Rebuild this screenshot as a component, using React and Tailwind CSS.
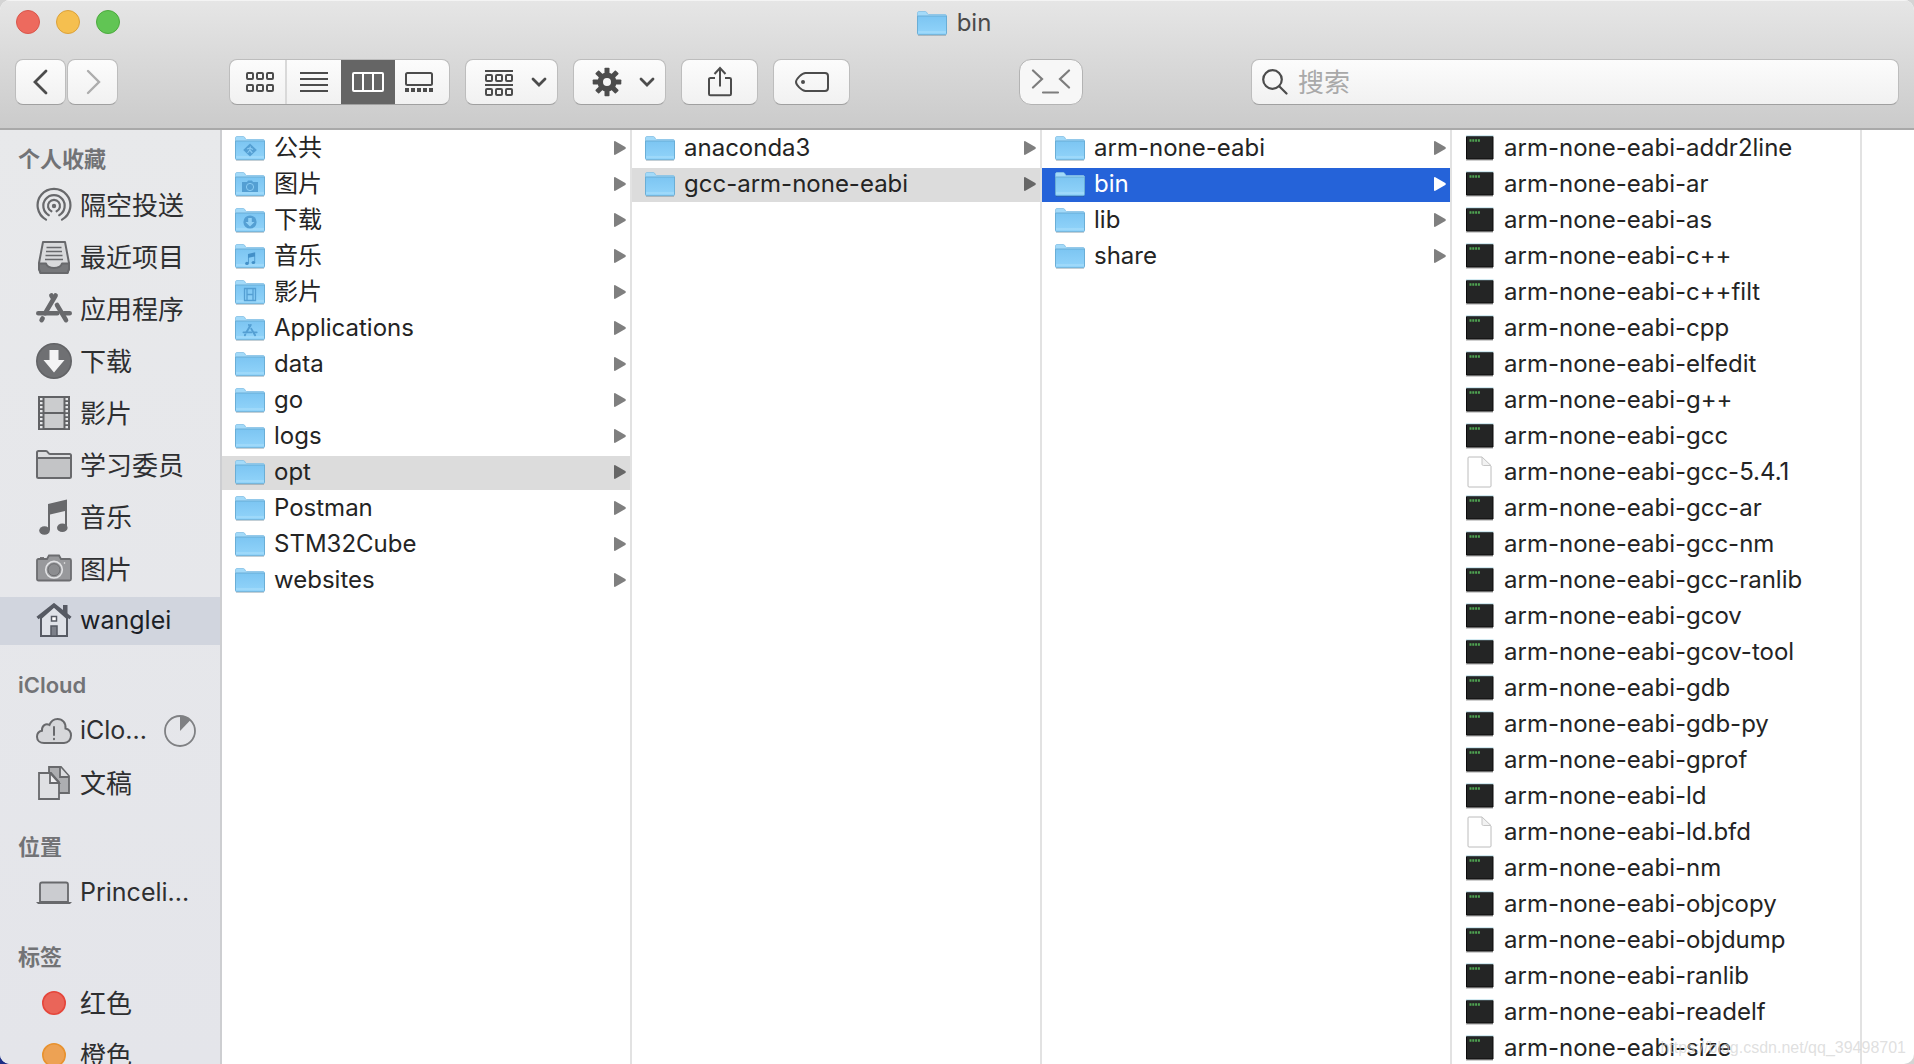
import React from "react";

const FONT = "font-['Inter','Noto_Sans_CJK_SC',sans-serif]";

/* ---------- shared glyphs ---------- */

function AppsGlyph() {
  return (
    <g fill="none" strokeLinecap="round">
      <path d="M19.6 4.5 9.2 22.2M6.6 27.4l-1 1.8" strokeWidth="4.6" />
      <path d="M15.4 4.5 17 7.2M21 14l9 15.2" strokeWidth="4.6" />
      <path d="M2.3 22.3h19M28 22.3h5.7" strokeWidth="4.6" />
    </g>
  );
}

function NotesGlyph() {
  return (
    <g>
      <path d="M11 5.5 31 1v28h-2.2V12.4L13.2 15.8V31H11z" />
      <ellipse cx="8.2" cy="31.6" rx="5" ry="4.3" />
      <ellipse cx="26" cy="29" rx="5" ry="4.3" />
    </g>
  );
}

/* ---------- sidebar icons, 36 x 36 ---------- */

function SideIcon({ name }) {
  const icons = {
    airdrop: (
      <g fill="none" stroke="#68696c" strokeWidth="2.2" strokeLinecap="round">
        <circle cx="18" cy="19" r="2.2" fill="#68696c" stroke="none" />
        <path d="M15.4 24.3a6 6 0 1 1 5.2 0" />
        <path d="M12.8 28.2a10.7 10.7 0 1 1 10.4 0" />
        <path d="M10 32.6a16.4 16.4 0 1 1 16 0" />
      </g>
    ),
    recents: (
      <g stroke="#68696c" strokeWidth="2" strokeLinejoin="round">
        <path d="M7 3h22l4 21v6l-1.500 4h-27L3 30v-6z" fill="#d9dadc" />
        <path d="M3 24.500h7c1 3 4 4.500 8 4.500s7-1.500 8-4.500h7V30l-1.500 4h-27L3 30z" fill="#77787b" />
        <path d="M10.500 8.500h15M10 12.500h16M9.500 16.500h17M9 20.500h18" strokeWidth="1.600" />
      </g>
    ),
    apps: (
      <g stroke="#68696c">
        <AppsGlyph />
      </g>
    ),
    downloads: (
      <g>
        <circle cx="18" cy="18" r="17.200" fill="#6f7073" stroke="#626366" strokeWidth="1.600" />
        <path d="M13.500 7h9v10h6L18 29.500 7.500 17h6z" fill="#f4f4f5" />
      </g>
    ),
    movies: (
      <g>
        <path d="M2 1h32v34H2z" fill="#616265" />
        <path d="M8.500 3h19v14h-19zM8.500 19h19v14h-19z" fill="#cbccce" />
        {[3, 7, 11, 15, 19, 23, 27, 31].map((y) => (
          <path key={y} d={`M4 ${y}h2.500v2.200H4zM29.500 ${y}h2.500v2.200h-2.500z`} fill="#e6e7e9" />
        ))}
      </g>
    ),
    folder: (
      <g fill="#c3c4c6" stroke="#68696c" strokeWidth="2" strokeLinejoin="round">
        <path d="M1 11V5.500C1 4.500 1.500 4 2.500 4h7.500c2 0 2 3 4 3h19.500c1 0 1.500.5 1.500 1.500V11z" fill="#dcdddf" />
        <path d="M1 11h34v18.500c0 1-.5 1.500-1.500 1.500h-31c-1 0-1.500-.5-1.500-1.500z" />
      </g>
    ),
    music: (
      <g fill="#68696c">
        <path d="M12 5 31 .500V28h-2V12l-15 3.500V31h-2z" />
        <ellipse cx="8.500" cy="31.500" rx="5.300" ry="4.300" />
        <ellipse cx="26.300" cy="28.800" rx="5.300" ry="4.300" />
      </g>
    ),
    pictures: (
      <g stroke="#6c6d70" strokeWidth="1.800">
        <path d="M2.500 8H11l2-3.500h10L25 8h8.500c1 0 1.500.5 1.500 1.500V28c0 1-.5 1.500-1.500 1.500h-31C1.500 29.500 1 29 1 28V9.500C1 8.500 1.500 8 2.500 8z" fill="#98999c" />
        <path d="M4 7h4" />
        <circle cx="18" cy="18.700" r="8.300" fill="#98999c" stroke="#e2e3e5" strokeWidth="1.600" />
        <circle cx="18" cy="18.700" r="6" fill="#8c8d90" strokeWidth="1" />
        <circle cx="28.500" cy="12" r=".8" fill="#eee" stroke="none" />
      </g>
    ),
    home: (
      <g stroke="#565a63" strokeWidth="2">
        <path d="M28 3h2.500v9L28 10z" fill="#565a63" />
        <path d="M5 15v18h26V15L18 3.500z" fill="#dfe2e8" />
        <path d="M1.500 15 18 2l16.500 13" fill="none" strokeWidth="3.400" />
        <path d="M15.500 13.500h5v4.500h-5z" fill="#fff" strokeWidth="1.500" />
        <path d="M15 23h6v10h-6z" fill="#7c8089" strokeWidth="1.500" />
      </g>
    ),
    cloud: (
      <g stroke="#68696c" strokeWidth="2" strokeLinecap="round">
        <path d="M8 30c-4 0-7-2.600-7-6.300 0-3.200 2.200-5.500 5-6C5.500 12.500 10 10 13.500 12 15 8 18 6 21.500 6c5 0 8.600 4 8 9.500 3.300.8 5.500 3.500 5.500 7 0 4.300-3 7.500-7 7.500z" fill="#d6d7da" />
        <path d="M18 14v8M18 25.800v.4" />
      </g>
    ),
    documents: (
      <g stroke="#68696c" strokeWidth="1.800">
        <path d="M13 2h12l8 9v17H13z" fill="#adaeb1" />
        <path d="M24 2v10h9" fill="#dcdde0" />
        <path d="M3 8h12l8 9v17H3z" fill="#dfe0e3" />
        <path d="M14 8v10h9z" fill="#f0f0f2" />
      </g>
    ),
    laptop: (
      <g>
        <path d="M4 27V9.500C4 8 4.500 7.500 6 7.500h24c1.500 0 2 .5 2 2V27z" fill="#cbccd0" stroke="#68696c" strokeWidth="1.800" />
        <path d="M0 27h36l-2 2H2z" fill="#68696c" />
      </g>
    ),
    red: <circle cx="18" cy="18" r="11.200" fill="#ea6559" stroke="#e5463b" strokeWidth="1.600" />,
    orange: <circle cx="18" cy="18" r="11.200" fill="#eda254" stroke="#e8922f" strokeWidth="1.600" />,
  };
  return (
    <svg viewBox="0 0 36 36" className="size-9 shrink-0" aria-hidden="true">
      {icons[name]}
    </svg>
  );
}

/* ---------- file icons ---------- */

function Badge({ name }) {
  const badges = {
    public: (
      <g>
        <path d="M15 7.500l6.800 6.500L15 20.500 8.200 14z" fill="#549fd3" />
        <g stroke="#86c8f2" strokeWidth="1.200" fill="none">
          <path d="M15.500 10.500 14.800 14l2.500 3M14.800 14l-2.300 3M12 13l3-1 3 1.500" />
        </g>
      </g>
    ),
    camera: (
      <g>
        <path d="M7 10h5l1-1.500h4L18 10h5v10H7z" fill="#549fd3" />
        <circle cx="15" cy="15" r="3.600" fill="#549fd3" stroke="#8accf4" strokeWidth="1" />
      </g>
    ),
    down: (
      <g>
        <circle cx="15" cy="14" r="6.600" fill="#549fd3" />
        <path d="M13.200 10h3.600v4h2.700L15 18.500 10.500 14h2.700z" fill="#8fd0f6" />
      </g>
    ),
    notes: (
      <g transform="translate(9 8) scale(.36)" fill="#4390c8">
        <NotesGlyph />
      </g>
    ),
    film: (
      <g fill="none" stroke="#549fd3" strokeWidth="1.300">
        <path d="M9.500 8.500h11v12h-11z" />
        <path d="M12 8v13M18 8v13M12 14.500h6" />
      </g>
    ),
    apps: (
      <g transform="translate(7.500 7) scale(.42)" stroke="#549fd3">
        <AppsGlyph />
      </g>
    ),
  };
  return badges[name] ?? null;
}

function FolderIcon({ badge }) {
  return (
    <svg viewBox="0 0 30 25" className="h-[25px] w-[30px] shrink-0" aria-hidden="true">
      <defs>
        <linearGradient id="folderFront" x1="0" y1="0" x2="0" y2="1">
          <stop offset="0" stopColor="#7cc5f2" />
          <stop offset="1" stopColor="#92d4fa" />
        </linearGradient>
      </defs>
      <path d="M1 24.500h28" stroke="#000" strokeOpacity=".16" />
      <path d="M.5 22V2C.5 1 1 .5 2 .5h6.500c1.500 0 1.500 3 3 3H28c1 0 1.500.5 1.500 1.500v17z" fill="#a3daf9" stroke="#84c0e4" strokeWidth=".8" />
      <path d="M.5 5h29v17.500c0 .7-.5 1.200-1.200 1.200H1.700C1 23.700.5 23.200.5 22.500z" fill="url(#folderFront)" stroke="#67aad3" strokeWidth=".9" />
      <path d="M1 21h28" stroke="#b5e3fc" strokeWidth=".8" />
      <Badge name={badge} />
    </svg>
  );
}

function ExecIcon() {
  return (
    <svg viewBox="0 0 30 26" className="h-[26px] w-[30px] shrink-0" aria-hidden="true">
      <path d="M1 25h27" stroke="#000" strokeOpacity=".25" strokeWidth="1.500" />
      <path d="M1.500 1.500H28V24H1.500z" fill="#242525" stroke="#0b0b0b" />
      <path d="M1 .8h27.500" stroke="#bfe0ea" />
      <path d="M4.500 5.500h11" stroke="#4fa452" strokeWidth="2.400" strokeDasharray="2 .8" />
    </svg>
  );
}

function FileIcon() {
  return (
    <svg viewBox="0 0 30 32" className="h-8 w-[30px] shrink-0" aria-hidden="true">
      <path d="M4 1h13l9 9v20c0 .6-.4 1-1 1H4c-.6 0-1-.4-1-1V2c0-.6.400-1 1-1z" fill="#fff" stroke="#bcbcbc" />
      <path d="M17 1v7c0 1 .5 1.500 1.500 1.500H26z" fill="#f2f2f2" stroke="#c6c6c6" />
    </svg>
  );
}

/* ---------- toolbar icons ---------- */

function ToolIcon({ name }) {
  const squares = (y) =>
    [1, 11, 21].map((x) => <rect key={x + "-" + y} x={x} y={y} width="6" height="6" rx="1" />);
  const icons = {
    back: <path d="M19 4 8 15l11 11" strokeWidth="2.800" stroke="#4c4c4c" strokeLinecap="round" />,
    forward: <path d="M9 4l11 11L9 26" strokeWidth="2.400" stroke="#adadad" strokeLinecap="round" />,
    grid: (
      <g>
        {squares(6)}
        {squares(18)}
      </g>
    ),
    list: <path d="M0 6h28M0 12h28M0 18h28M0 24h28" />,
    gallery: (
      <g>
        <rect x="1" y="6" width="26" height="12" rx="1.500" />
        <path d="M0 23h28" strokeWidth="4" strokeDasharray="4 2" />
      </g>
    ),
    arrange: (
      <g>
        <path d="M0 4h28M0 18h28" />
        {squares(8)}
        {squares(22)}
      </g>
    ),
    gear: (
      <g stroke="none" fill="#4c4c4c">
        {[0, 45, 90, 135, 180, 225, 270, 315].map((a) => (
          <path key={a} d="M11.500 1.500c0-.5.300-.8.800-.8h3.400c.5 0 .8.300.8.800V8h-5z" transform={`rotate(${a} 14 15)`} />
        ))}
        <path fillRule="evenodd" d="M14 5.500a9.500 9.500 0 1 0 0 19 9.500 9.500 0 0 0 0-19zm0 5.500a4 4 0 1 1 0 8 4 4 0 0 1 0-8z" />
      </g>
    ),
    share: (
      <g>
        <path d="M9 11H4.500C3.700 11 3 11.500 3 12.300V27c0 .8.600 1.300 1.400 1.300h19.200c.8 0 1.400-.5 1.400-1.300V12.300c0-.8-.7-1.300-1.500-1.300H19" />
        <path d="M14 19.500V1M8.500 7 14 1l5.500 6" />
      </g>
    ),
  };
  return (
    <svg viewBox="0 0 28 30" className="h-[30px] w-7 shrink-0 overflow-visible" fill="none" stroke="#4c4c4c" strokeWidth="2" aria-hidden="true">
      {icons[name]}
    </svg>
  );
}

function Chevron() {
  return (
    <svg viewBox="0 0 16 10" className="h-2.5 w-4 shrink-0" fill="none" stroke="#4c4c4c" strokeWidth="2.800" strokeLinecap="round" aria-hidden="true">
      <path d="M2 2l6 6 6-6" />
    </svg>
  );
}

const BUTTON =
  "flex h-[46px] shrink-0 items-center justify-center rounded-lg border border-[#bdbdbd] border-b-[#a0a0a0] bg-linear-to-b from-[#fcfcfc] to-[#f1f1f1]";

function Toolbar() {
  return (
    <header className="shrink-0 border-b-2 border-[#a9a9a9] bg-linear-to-b from-[#e6e6e6] to-[#cbcbcb] shadow-[inset_0_1px_0_#f4f4f4]">
      <div className="grid h-11 grid-cols-[1fr_auto_1fr] items-center px-4">
        <div className="flex gap-4">
          <button aria-label="关闭" className="size-6 rounded-full border border-[#d9564b] bg-[#ed6a5e]" />
          <button aria-label="最小化" className="size-6 rounded-full border border-[#dba13a] bg-[#f5bf4f]" />
          <button aria-label="缩放" className="size-6 rounded-full border border-[#4caa3e] bg-[#61c554]" />
        </div>
        <h1 className="flex items-center gap-2.5 pt-0.5 pr-1.5 text-2xl text-[#4a4a4a]">
          <FolderIcon />
          bin
        </h1>
      </div>
      <div className="flex items-center px-[15px] pt-[15px] pb-[23px]">
        <div className="flex gap-px">
          <button aria-label="后退" className={`${BUTTON} w-[51px]`}><ToolIcon name="back" /></button>
          <button aria-label="前进" className={`${BUTTON} w-[51px]`}><ToolIcon name="forward" /></button>
        </div>
        <div className="ml-[111px] flex gap-[15px]">
          <div className={`${BUTTON} w-[221px] overflow-hidden`}>
            <button aria-label="图标" className="flex h-full flex-1 items-center justify-center border-r-2 border-[#d9d9d9] pl-1"><ToolIcon name="grid" /></button>
            <button aria-label="列表" className="flex h-full w-[54px] items-center justify-center"><ToolIcon name="list" /></button>
            <button aria-label="分栏" aria-pressed="true" className="flex h-full w-[54px] items-center justify-center bg-[#656565]">
              <svg viewBox="0 0 32 20" className="h-5 w-8" fill="none" stroke="#fff" strokeWidth="2" aria-hidden="true">
                <rect x="1" y="1" width="30" height="18" rx="1" />
                <path d="M11 1v18M21 1v18" />
              </svg>
            </button>
            <button aria-label="画廊" className="flex h-full w-[54px] items-center justify-center pr-1.5"><ToolIcon name="gallery" /></button>
          </div>
          <button aria-label="排列" className={`${BUTTON} w-[93px] gap-[18px] pl-2`}><ToolIcon name="arrange" /><Chevron /></button>
          <button aria-label="操作" className={`${BUTTON} w-[93px] gap-[18px] pl-2`}><ToolIcon name="gear" /><Chevron /></button>
          <button aria-label="共享" className={`${BUTTON} w-[77px]`}><ToolIcon name="share" /></button>
          <button aria-label="编辑标签" className={`${BUTTON} w-[77px]`}>
            <svg viewBox="0 0 36 22" className="h-[22px] w-9" fill="none" stroke="#4c4c4c" strokeWidth="2" aria-hidden="true">
              <path d="M11.500 2H31c2 0 3 1 3 3v12c0 2-1 3-3 3H11.500C8 20 2 14 2 11s6-9 9.500-9z" />
              <circle cx="9" cy="11" r="2" fill="#4c4c4c" stroke="none" />
            </svg>
          </button>
        </div>
        <div className="flex-[169]" />
        <button aria-label="终端" className="flex h-[46px] w-16 shrink-0 items-center justify-center rounded-xl border border-[#b3b3b3] bg-[#f7f7f7]">
          <svg viewBox="0 0 40 26" className="h-[26px] w-10" fill="none" stroke="#7d7d7d" strokeWidth="2.200" strokeLinecap="round" aria-hidden="true">
            <path d="M2 1.500l9 8.500-9 8.500M38 1.500 29 10l9 8.500M12 23.500h15" />
          </svg>
        </button>
        <div className="flex-[168]" />
        <label className={`${BUTTON} min-w-0 flex-[626] gap-2.5 px-2.5`}>
          <svg viewBox="0 0 26 26" className="size-[26px] shrink-0" fill="none" stroke="#4c4c4c" strokeWidth="2.200" strokeLinecap="round" aria-label="搜索">
            <circle cx="10.500" cy="10.500" r="9.300" />
            <path d="M17.200 17.200 24.500 24.500" />
          </svg>
          <input type="search" placeholder="搜索" className="w-full min-w-0 bg-transparent pt-0.5 text-[26px] leading-8 outline-none placeholder:text-[#a9a9a9]" />
        </label>
      </div>
    </header>
  );
}

/* ---------- sidebar ---------- */

const SECTIONS = [
  {
    title: "个人收藏",
    items: [
      ["airdrop", "隔空投送"],
      ["recents", "最近项目"],
      ["apps", "应用程序"],
      ["downloads", "下载"],
      ["movies", "影片"],
      ["folder", "学习委员"],
      ["music", "音乐"],
      ["pictures", "图片"],
      ["home", "wanglei"],
    ],
  },
  { title: "iCloud", items: [["cloud", "iClo..."], ["documents", "文稿"]] },
  { title: "位置", items: [["laptop", "Princeli..."]] },
  { title: "标签", items: [["red", "红色"], ["orange", "橙色"]] },
];

const isLatin = (label) => /^[A-Za-z]/.test(label);

function Sidebar() {
  return (
    <nav className="flex w-[222px] shrink-0 flex-col gap-[18px] overflow-hidden border-r-2 border-[#cdced1] bg-linear-to-b from-[#e8e9eb] to-[#e4e5ea] pt-[7px]">
      {SECTIONS.map((section) => (
        <section key={section.title} className="shrink-0">
          <h2 className="pl-[18px] text-[22px] leading-[44px] font-semibold text-[#727376]">{section.title}</h2>
          <ul className="flex flex-col gap-1">
            {section.items.map(([icon, label]) => (
              <li key={label}>
                <button
                  className={`flex h-12 w-full items-center gap-2 pr-6 pl-9 text-left whitespace-nowrap ${
                    isLatin(label) ? "text-[25px]" : "text-[26px]"
                  } ${label === "wanglei" ? "bg-[#d1d5de] text-[#1c1f27]" : "text-[#2e2f31]"}`}
                >
                  <SideIcon name={icon} />
                  {label}
                  {icon === "cloud" && (
                    <svg viewBox="0 0 32 32" className="ml-auto size-8 shrink-0" role="img" aria-label="正在同步">
                      <circle cx="16" cy="16" r="15" fill="none" stroke="#7f8083" strokeWidth="1.800" />
                      <path d="M16 16V1a15 15 0 0 1 10.300 4.200z" fill="#7f8083" />
                    </svg>
                  )}
                </button>
              </li>
            ))}
          </ul>
        </section>
      ))}
    </nav>
  );
}

/* ---------- columns ---------- */

const HOME = [
  ["公共", "public"],
  ["图片", "camera"],
  ["下载", "down"],
  ["音乐", "notes"],
  ["影片", "film"],
  ["Applications", "apps"],
  ["data"],
  ["go"],
  ["logs"],
  ["opt"],
  ["Postman"],
  ["STM32Cube"],
  ["websites"],
];

const TOOLS = [
  "addr2line", "ar", "as", "c++", "c++filt", "cpp", "elfedit", "g++", "gcc", "gcc-5.4.1",
  "gcc-ar", "gcc-nm", "gcc-ranlib", "gcov", "gcov-tool", "gdb", "gdb-py", "gprof", "ld",
  "ld.bfd", "nm", "objcopy", "objdump", "ranlib", "readelf", "size",
];

const DOCUMENTS = ["gcc-5.4.1", "ld.bfd"];

function Row({ icon, label, state, folder }) {
  const tone =
    state === "active" ? "bg-[#2563d9] text-white" : state === "path" ? "bg-[#dcdcdc] text-[#242424]" : "text-[#242424]";
  const arrow = state === "active" ? "fill-white" : state === "path" ? "fill-[#666666]" : "fill-[#7f7f7f]";
  return (
    <li>
      <button className={`flex h-[34px] w-full items-center gap-[9px] pr-1 pb-0.5 pl-[13px] text-left text-2xl whitespace-nowrap ${tone}`}>
        {icon}
        <span className="min-w-0 flex-1 truncate">{label}</span>
        {folder && (
          <svg viewBox="0 0 12 14" className={`h-3.5 w-3 shrink-0 ${arrow}`} aria-hidden="true">
            <path d="M0 1C0 .2.600-.2 1.300.2l10 5.900c.7.400.7 1.400 0 1.800l-10 5.900C.6 14.200 0 13.800 0 13z" />
          </svg>
        )}
      </button>
    </li>
  );
}

function Column({ children }) {
  return (
    <ul className="flex min-w-0 flex-col gap-0.5 overflow-hidden border-r-2 border-[#e2e2e2] pt-0.5 *:shrink-0">{children}</ul>
  );
}

function FolderColumn({ items, selected, state }) {
  return (
    <Column>
      {items.map(([label, badge]) => (
        <Row
          key={label}
          folder
          icon={<FolderIcon badge={badge} />}
          label={label}
          state={label === selected ? state : undefined}
        />
      ))}
    </Column>
  );
}

export default function App() {
  return (
    <div className={`h-screen bg-[linear-gradient(45deg,#1d2f86_1%,#d4d4d4_1%)] ${FONT}`}>
      <div className="relative flex h-full flex-col overflow-hidden rounded-[10px] bg-white">
        <Toolbar />
        <div className="flex min-h-0 flex-1">
          <Sidebar />
          <main className="grid min-w-0 flex-1 grid-cols-[repeat(4,minmax(0,410fr))_52fr] grid-rows-[minmax(0,1fr)]">
            <FolderColumn items={HOME} selected="opt" state="path" />
            <FolderColumn items={[["anaconda3"], ["gcc-arm-none-eabi"]]} selected="gcc-arm-none-eabi" state="path" />
            <FolderColumn items={[["arm-none-eabi"], ["bin"], ["lib"], ["share"]]} selected="bin" state="active" />
            <Column>
              {TOOLS.map((tool) => (
                <Row
                  key={tool}
                  icon={DOCUMENTS.includes(tool) ? <FileIcon /> : <ExecIcon />}
                  label={`arm-none-eabi-${tool}`}
                />
              ))}
            </Column>
          </main>
        </div>
        <p className="pointer-events-none absolute right-2 bottom-1 font-['Liberation_Sans',sans-serif] text-base text-[#d2d2d2]/70">
          https://blog.csdn.net/qq_39498701
        </p>
      </div>
    </div>
  );
}
